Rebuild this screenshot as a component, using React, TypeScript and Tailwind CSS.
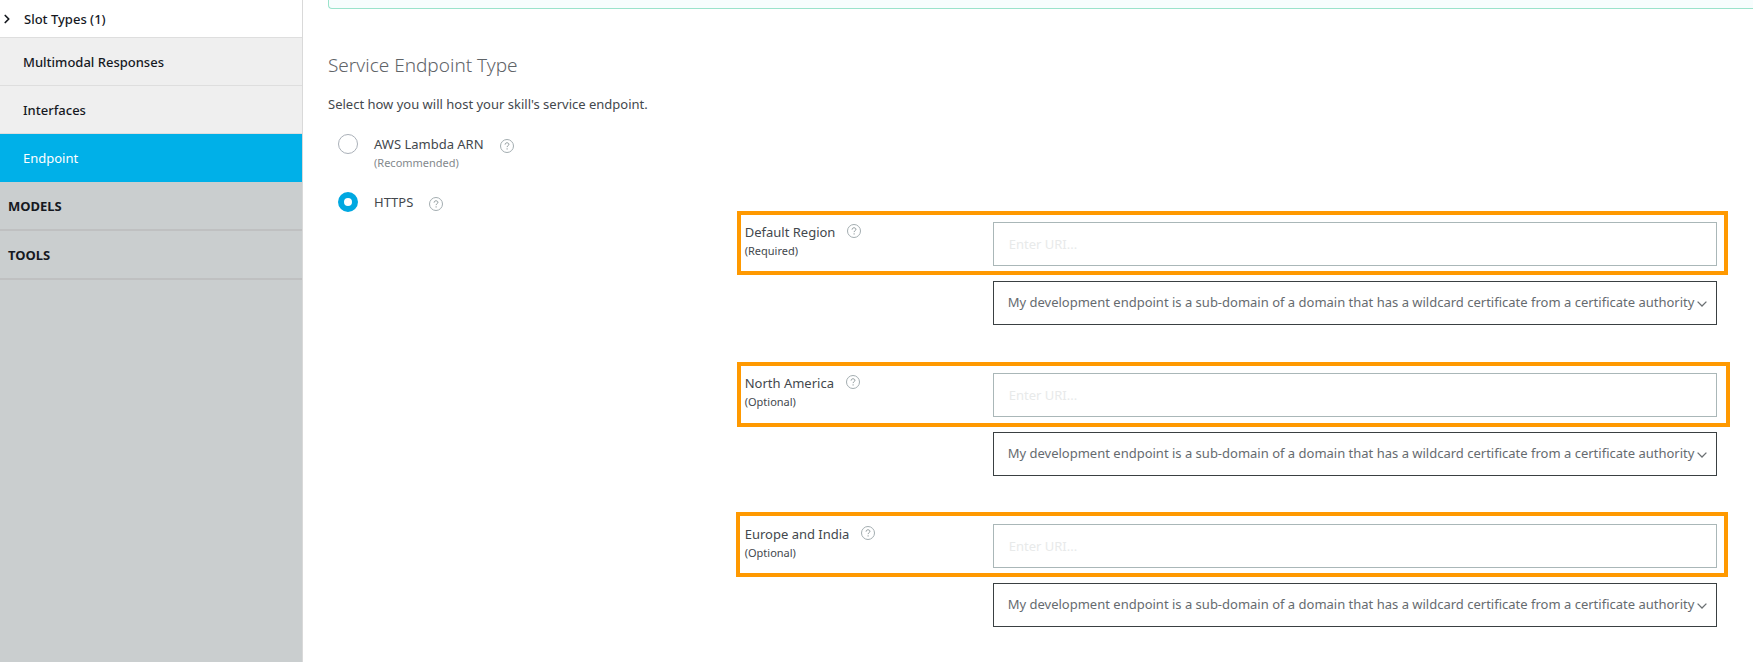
import { ChevronRight } from "lucide-react";

const certificateOptions = [
  "My development endpoint is a sub-domain of a domain that has a wildcard certificate from a certificate authority",
];

const regions = [
  { id: "default", name: "Default Region", note: "(Required)", frame: "-left-2 -right-[11px] -top-[11px] -bottom-[9px]" },
  { id: "na", name: "North America", note: "(Optional)", frame: "-left-2 -right-[13px] -top-[11px] -bottom-[10px]" },
  { id: "eu", name: "Europe and India", note: "(Optional)", frame: "-left-[9px] -right-[11px] -top-3 -bottom-[9px]" },
];

function Help({ label }: { label: string }) {
  return (
    <button type="button" aria-label={`Help: ${label}`} className="block size-3.5 shrink-0">
      <svg viewBox="0 0 14 14" className="size-3.5" fill="none" stroke="#a3adb0">
        <circle cx="7" cy="7" r="6.5" />
        <path d="M5.1 5.6c0-1.1.8-1.8 1.9-1.8s1.9.6 1.9 1.6c0 1.3-1.8 1.3-1.8 2.7" stroke="#8d979a" />
        <path d="M7.1 9.3v1.2" stroke="#8d979a" />
      </svg>
    </button>
  );
}

function NavLink({ children, active = false }: { children: string; active?: boolean }) {
  return (
    <a
      href="#"
      aria-current={active ? "page" : undefined}
      className={
        active
          ? "flex h-12 items-center bg-[#00b0e8] pl-[23px] text-white"
          : "flex h-12 items-center border-b border-[#dedede] bg-[#efefef] pl-[23px] font-medium"
      }
    >
      {children}
    </a>
  );
}

function Section({ children }: { children: string }) {
  return (
    <button type="button" className="flex h-[49px] w-full items-center border-b-2 border-[#bfc0c1] pl-2 font-bold">
      {children}
    </button>
  );
}

function Radio({ id, checked = false }: { id: string; checked?: boolean }) {
  return (
    <input
      type="radio"
      id={id}
      name="endpoint-type"
      defaultChecked={checked}
      className="size-5 shrink-0 appearance-none rounded-full border border-[#aab0b8] bg-white checked:border-[6px] checked:border-[#00a8e1]"
    />
  );
}

export default function App() {
  return (
    <div className="flex min-h-screen bg-white font-['Noto_Sans',sans-serif] text-[13px] leading-5 text-[#43484d]">
      <nav className="w-[303px] shrink-0 border-r border-[#d9d9d9] bg-[#cacecf] text-[#16191f]">
        <a href="#" className="flex h-[38px] items-center border-b border-[#dedede] bg-white font-medium">
          <ChevronRight className="size-3.5 shrink-0" strokeWidth={3} />
          <span className="pl-2.5">Slot Types (1)</span>
        </a>
        <NavLink>Multimodal Responses</NavLink>
        <NavLink>Interfaces</NavLink>
        <NavLink active>Endpoint</NavLink>
        <Section>MODELS</Section>
        <Section>TOOLS</Section>
      </nav>

      <main className="min-w-0 flex-1 overflow-hidden pl-[25px]">
        <div className="h-[9px] rounded-bl border-b border-l border-[#9be3cb] bg-[#f7fdfd]" />
        <div className="pr-9">
          <h1 className="pt-11 text-[19px] leading-6 font-light text-[#5f6468]">Service Endpoint Type</h1>
          <p className="pt-[17px]">Select how you will host your skill's service endpoint.</p>

          <div className="flex items-start pt-5 pl-2.5">
            <Radio id="lambda" />
            <div className="pl-4">
              <div className="flex items-end gap-4">
                <label htmlFor="lambda">AWS Lambda ARN</label>
                <div className="pb-px">
                  <Help label="AWS Lambda ARN" />
                </div>
              </div>
              <p className="text-[11px] leading-[18px] text-[#83888c]">(Recommended)</p>
            </div>
          </div>
          <div className="flex items-end pt-5 pl-2.5">
            <Radio id="https" checked />
            <label htmlFor="https" className="pr-4 pl-4">HTTPS</label>
            <div className="pb-px">
              <Help label="HTTPS" />
            </div>
          </div>

          <div className="ml-[30%] flex flex-col gap-12 pt-2.5 pb-9">
            {regions.map((region) => (
              <section key={region.id}>
                <div className="relative flex">
                  <div className="w-[248px] shrink-0">
                    <div className="flex items-start gap-3">
                      <label htmlFor={`${region.id}-uri`}>{region.name}</label>
                      <div className="pt-0.5">
                        <Help label={region.name} />
                      </div>
                    </div>
                    <p className="text-[11px] leading-[18px]">{region.note}</p>
                  </div>
                  <input
                    id={`${region.id}-uri`}
                    type="text"
                    placeholder="Enter URI..."
                    className="h-11 min-w-0 flex-1 border border-[#aab7b8] px-[15px] placeholder:text-[#e8eaea]"
                  />
                  <div className={`pointer-events-none absolute border-4 border-[#ff9900] ${region.frame}`} />
                </div>
                <div className="relative mt-[15px] ml-[248px]">
                  <select
                    aria-label={`${region.name} certificate type`}
                    className="block h-11 w-full appearance-none border border-[#3a4042] bg-white pb-0.5 pl-3.5 text-[#666b6f]"
                  >
                    {certificateOptions.map((option) => (
                      <option key={option}>{option}</option>
                    ))}
                  </select>
                  <svg viewBox="0 0 10 6" className="pointer-events-none absolute top-5 right-2.5 h-1.5 w-2.5" fill="none" stroke="#6b7073" strokeWidth="1.3">
                    <path d="M.6.6 5 5 9.4.6" />
                  </svg>
                </div>
              </section>
            ))}
          </div>
        </div>
      </main>
    </div>
  );
}
